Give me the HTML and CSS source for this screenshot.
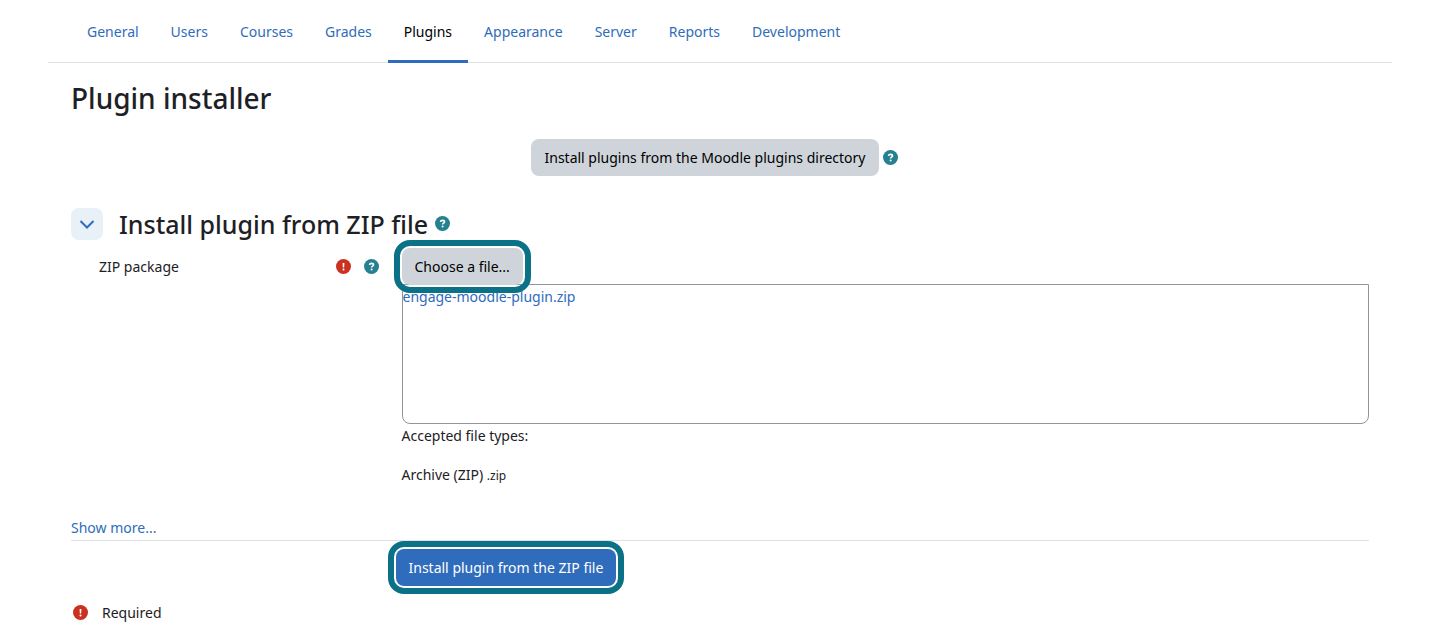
FILE: index.html
```html
<!DOCTYPE html>
<html lang="en">
<head>
  <meta charset="UTF-8" />
  <meta name="viewport" content="width=device-width, initial-scale=1" />
  <title>Plugin installer</title>
  <link rel="stylesheet" href="styles.css">
</head>
<body>
  <!-- shared icons -->
  <svg class="sprite" aria-hidden="true">
    <symbol id="icon-help" viewBox="0 0 16 16">
      <circle cx="7.5" cy="7.5" r="7.5" fill="#25808f" />
      <path d="M5.500 6C5.600 4.900 6.400 4.400 7.500 4.400c1.200 0 2 .6 2 1.500 0 1.300-1.900 1.200-1.900 2.500" fill="none" stroke="#fff" stroke-width="1.600" />
      <circle cx="7.600" cy="10.400" r="1" fill="#fff" />
    </symbol>
    <symbol id="icon-required" viewBox="0 0 16 16">
      <circle cx="7.5" cy="7.5" r="7.5" fill="#ca3120" />
      <path d="M6.600 4h1.800l-.2 4.500H6.800z" fill="#fff" />
      <circle cx="7.500" cy="10.400" r="1" fill="#fff" />
    </symbol>
  </svg>

  <nav class="tabs">
    <a href="#">General</a>
    <a href="#">Users</a>
    <a href="#">Courses</a>
    <a href="#">Grades</a>
    <a href="#" class="active" aria-current="page">Plugins</a>
    <a href="#">Appearance</a>
    <a href="#">Server</a>
    <a href="#">Reports</a>
    <a href="#">Development</a>
  </nav>

  <main class="content">
    <h1>Plugin installer</h1>

    <div class="directory">
      <button type="button" class="btn">Install plugins from the Moodle plugins directory</button>
      <svg class="icon" role="img" aria-label="Help"><use href="#icon-help" /></svg>
    </div>

    <form>
      <div class="section-head">
        <button type="button" class="toggle" aria-label="Collapse" aria-expanded="true">
          <svg width="16" height="16" viewBox="0 0 16 16"><path d="M1.500 5l6.500 6.500L14.500 5" /></svg>
        </button>
        <h2>Install plugin from ZIP file</h2>
        <svg class="icon" role="img" aria-label="Help"><use href="#icon-help" /></svg>
      </div>

      <div class="row">
        <div class="row-label">
          <label for="choose">ZIP package</label>
          <span class="row-icons">
            <svg class="icon" role="img" aria-label="Required"><use href="#icon-required" /></svg>
            <svg class="icon" role="img" aria-label="Help"><use href="#icon-help" /></svg>
          </span>
        </div>
        <div class="row-field">
          <button type="button" id="choose" class="btn ringed">Choose a file...</button>
          <div class="dropzone"><a href="#">engage-moodle-plugin.zip</a></div>
          <p>Accepted file types:</p>
          <p class="filetype">Archive (ZIP) <small>.zip</small></p>
        </div>
      </div>

      <div class="more"><a href="#">Show more...</a></div>

      <div class="actions">
        <button type="submit" class="btn btn-primary ringed">Install plugin from the ZIP file</button>
      </div>
    </form>

    <div class="required">
      <svg class="icon" aria-hidden="true"><use href="#icon-required" /></svg>
      <span>Required</span>
    </div>
  </main>
</body>
</html>
```

FILE: styles.css
```css
* {
  box-sizing: border-box;
}

body {
  margin: 0;
  padding: 0 47px 0 48px;
  background: #fff;
  color: #1d2125;
  font-family: "Segoe UI", "Noto Sans", sans-serif;
  font-size: 14px;
  line-height: 24px;
}

a {
  color: #2f6cbb;
  text-decoration: none;
}

a:hover {
  text-decoration: underline;
}

h1, h2, p {
  margin: 0;
}

.sprite {
  position: absolute;
  width: 0;
  height: 0;
}

.icon {
  width: 16px;
  height: 16px;
  flex: none;
}

/* TABS */
.tabs {
  display: flex;
  padding: 0 23px;
  border-bottom: 1px solid #dee2e6;
}

.tabs a {
  padding: 20px 16px 16px;
  margin-bottom: -1px;
  border-bottom: 3px solid transparent;
}

.tabs .active {
  color: #000;
  border-bottom-color: #2f6cbb;
}

.content {
  padding: 18px 23px;
}

h1 {
  font-size: 28px;
  font-weight: 500;
  line-height: 34px;
}

h2 {
  font-size: 25px;
  font-weight: 500;
  line-height: 32px;
}

/* BUTTONS */
.btn {
  display: block;
  height: 37px;
  padding: 0 13px;
  border: 0;
  border-radius: 8px;
  background: #ced4da;
  color: #000;
  font: inherit;
  cursor: pointer;
}

.btn-primary {
  background: #2f6cbb;
  color: #fff;
}

/* highlight ring around a button */
.ringed {
  position: relative;
}

.ringed::after {
  content: '';
  position: absolute;
  inset: -8px;
  border: 6px solid #0b7186;
  border-radius: 16px;
  pointer-events: none;
}

.directory {
  display: flex;
  align-items: center;
  justify-content: center;
  gap: 4px;
  padding-right: 10px;
  margin: 24px 0 32px;
}

/* ZIP SECTION */
.section-head {
  display: flex;
  align-items: center;
}

.section-head h2 {
  margin: 0 7px 0 16px;
}

.toggle {
  display: flex;
  align-items: center;
  justify-content: center;
  width: 32px;
  height: 32px;
  padding: 0;
  border: 0;
  border-radius: 8px;
  background: #e8f0f8;
  cursor: pointer;
}

.toggle path {
  fill: none;
  stroke: #2f6cbb;
  stroke-width: 2;
}

.row {
  display: flex;
  margin-top: 8px;
}

.row-label {
  display: flex;
  align-items: center;
  justify-content: space-between;
  flex: 0 0 25%;
  height: 38px;
  padding: 0 16px 0 28px;
}

.row-icons {
  display: flex;
  gap: 12px;
}

.row-field {
  flex: 1;
  padding-left: 6px;
}

.dropzone {
  height: 140px;
  margin-top: -1px;
  border: 1px solid #8f959e;
  border-radius: 0 0 8px 8px;
}

.filetype {
  margin-top: 15px;
}

small {
  font-size: 12px;
}

.more {
  margin-top: 28px;
  border-bottom: 1px solid #dee2e6;
}

.actions {
  margin: 8px 0 15px;
  padding-left: 25%;
}

.required {
  display: flex;
  align-items: center;
  gap: 13px;
  padding-left: 2px;
}
```
